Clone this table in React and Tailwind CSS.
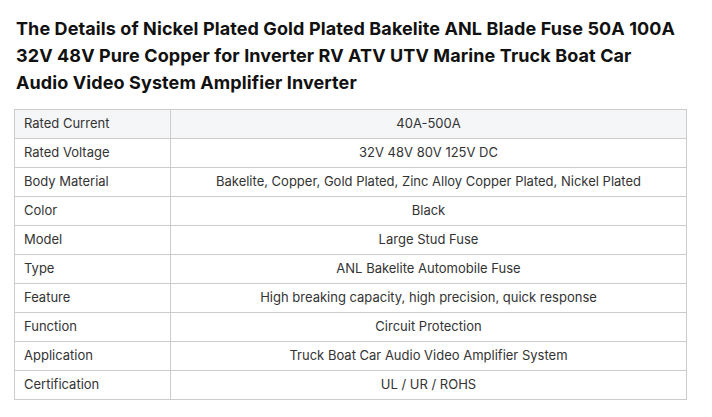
import React from "react";

const specs = [
  ["Rated Current", "40A-500A"],
  ["Rated Voltage", "32V 48V 80V 125V DC"],
  ["Body Material", "Bakelite, Copper, Gold Plated, Zinc Alloy Copper Plated, Nickel Plated"],
  ["Color", "Black"],
  ["Model", "Large Stud Fuse"],
  ["Type", "ANL Bakelite Automobile Fuse"],
  ["Feature", "High breaking capacity, high precision, quick response"],
  ["Function", "Circuit Protection"],
  ["Application", "Truck Boat Car Audio Video Amplifier System"],
  ["Certification", "UL / UR / ROHS"],
];

const App = () => {
  return (
    <div className="w-[712px] h-[417px] bg-white pt-[15px] pl-[14px] font-['Inter','Liberation_Sans',sans-serif]">
      <h1 className="pl-[2px] w-[672px] text-[18px] leading-[27px] font-bold text-[#111] tracking-[0.1px]">
        The Details of Nickel Plated Gold Plated Bakelite ANL Blade Fuse 50A 100A 32V 48V Pure Copper for Inverter RV ATV UTV Marine Truck Boat Car Audio Video System Amplifier Inverter
      </h1>

      <table className="mt-[13px] w-[673px] border-collapse text-[13px] text-[#333]">
        <tbody>
          {specs.map(([label, value], i) => (
            <tr key={label} className={i === 0 ? "bg-[#f5f6f8]" : ""}>
              <td className="h-[29px] w-[156px] border border-[#cccccc] pl-[9px] py-0 align-middle">{label}</td>
              <td className="h-[29px] border border-[#cccccc] text-center py-0 align-middle">{value}</td>
            </tr>
          ))}
        </tbody>
      </table>
    </div>
  );
};

export default App;
